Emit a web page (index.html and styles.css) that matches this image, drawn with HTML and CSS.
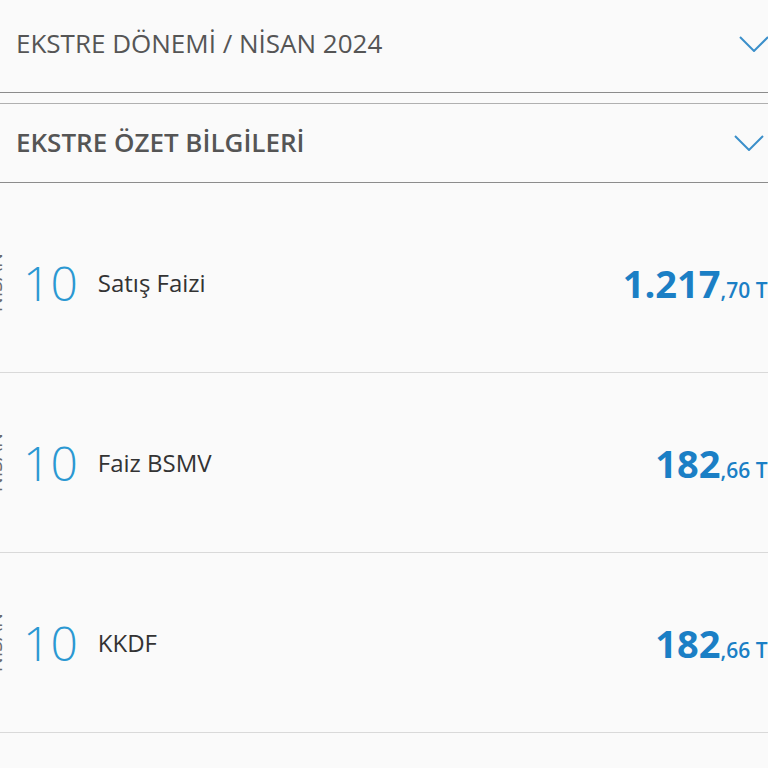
FILE: index.html
```html
<!DOCTYPE html>
<html lang="tr">
<head>
<meta charset="utf-8">
<link rel="stylesheet" href="styles.css">
</head>
<body>
<div class="page">
  <div class="panel panel-period">
    <div class="panel-title">EKSTRE DÖNEMİ / NİSAN 2024</div>
    <svg class="chev" viewBox="0 0 30 16" width="30" height="16"><path d="M1 1 L15 15 L29 1" fill="none" stroke="#3b8fca" stroke-width="2"/></svg>
  </div>
  <div class="panel panel-summary">
    <div class="panel-title bold">EKSTRE ÖZET BİLGİLERİ</div>
    <svg class="chev" viewBox="0 0 30 16" width="30" height="16"><path d="M1 1 L15 15 L29 1" fill="none" stroke="#3b8fca" stroke-width="2"/></svg>
  </div>
  <div class="list">
    <div class="row">
      <div class="month"><span>NİSAN</span></div>
      <div class="day">10</div>
      <div class="label">Satış Faizi</div>
      <div class="amount"><span class="int">1.217</span><span class="dec">,70 TL</span></div>
    </div>
    <div class="row">
      <div class="month"><span>NİSAN</span></div>
      <div class="day">10</div>
      <div class="label">Faiz BSMV</div>
      <div class="amount"><span class="int">182</span><span class="dec">,66 TL</span></div>
    </div>
    <div class="row">
      <div class="month"><span>NİSAN</span></div>
      <div class="day">10</div>
      <div class="label">KKDF</div>
      <div class="amount"><span class="int">182</span><span class="dec">,66 TL</span></div>
    </div>
  </div>
</div>
</body>
</html>
```
FILE: styles.css
```css
html, body {
  margin: 0;
  padding: 0;
  background: #fafafa;
  overflow: hidden;
}
body {
  font-family: "Open Sans", "Noto Sans", sans-serif;
  width: 768px;
  height: 768px;
}
.page {
  width: 768px;
  overflow: hidden;
}
.panel {
  display: flex;
  align-items: center;
  justify-content: space-between;
  padding: 0 4px 0 16px;
}
.panel-period {
  height: 92px;
  border-bottom: 1px solid #8c8c8c;
  padding-right: 0;
}
.panel-period .panel-title {
  margin-top: -4px;
}
.panel-summary {
  margin-top: 10px;
  height: 78px;
  border-top: 1px solid #b0b0b0;
  border-bottom: 1px solid #8c8c8c;
}
.panel-title {
  font-size: 26px;
  color: #555555;
  line-height: 1.2;
}
.panel-title.bold {
  font-weight: 600;
}
.chev {
  display: block;
}
.panel-period .chev {
  margin-right: -1px;
  margin-top: -5px;
}
.list {
  margin-top: 10px;
}
.row {
  display: flex;
  align-items: center;
  height: 179px;
  border-bottom: 1px solid #d9d9d9;
}
.month {
  width: 24px;
  margin-left: -19px;
  writing-mode: vertical-rl;
  transform: rotate(180deg);
  font-size: 20px;
  color: #6a6a6a;
  text-align: center;
}
.day {
  margin-left: 18px;
  font-size: 48px;
  font-weight: 300;
  color: #2b98d2;
  line-height: 1;
}
.label {
  margin-left: 20px;
  font-size: 24px;
  color: #333333;
}
.amount {
  margin-left: auto;
  margin-right: -11px;
  color: #1b7fc5;
  white-space: nowrap;
}
.amount .int {
  font-size: 38px;
  font-weight: 700;
}
.amount .dec {
  font-size: 21px;
  font-weight: 600;
}
```
